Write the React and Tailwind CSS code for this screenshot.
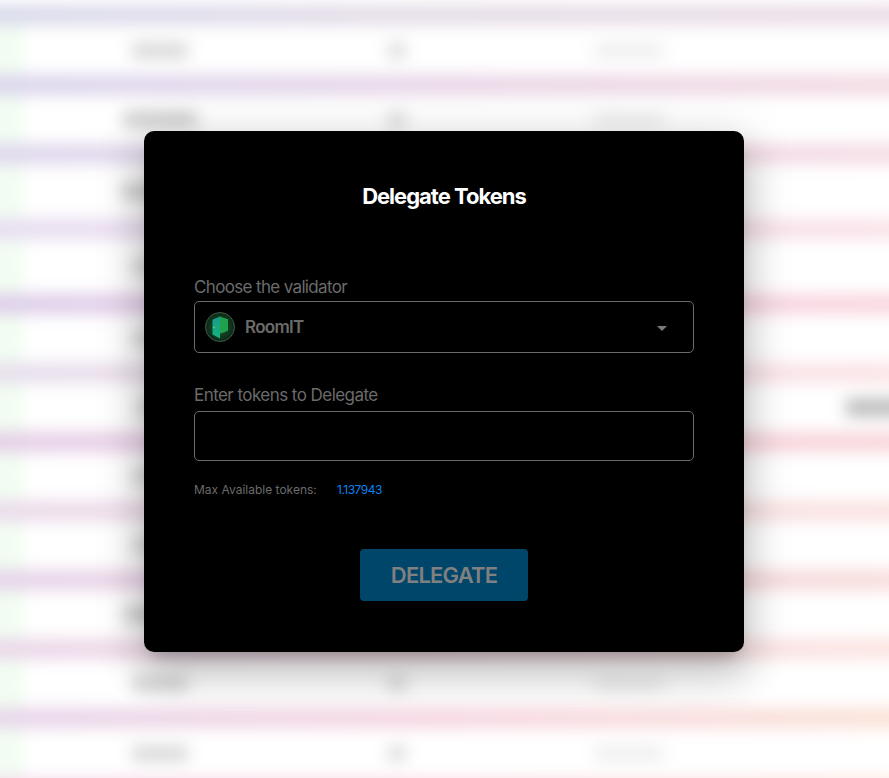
import React from "react";

// Validator table behind the dialog; h = row height, bar = divider gradient stops
const rows = [
  { h: "h-[50px]", bar: "from-[#d8d9ec] via-[#e5dce7] to-[#ebdce6]", ml: "ml-[152px]", w: "w-[56px]" },
  { h: "h-[49px]", bar: "from-[#d9d4ed] via-[#e8d5e7] to-[#f3d9e2]", ml: "ml-[143px]", w: "w-[74px]", dark: true },
  { h: "h-[55px]", bar: "from-[#ddd6ed] via-[#ead7e7] to-[#f6dbe4]", ml: "ml-[142px]", w: "w-[74px]", dark: true },
  { h: "h-[55px]", bar: "from-[#e6dcf1] via-[#f1dceb] to-[#fae2e8]", ml: "ml-[152px]", w: "w-[56px]" },
  { h: "h-[49px]", bar: "from-[#dbccea] via-[#edd0e2] to-[#fad6de]", ml: "ml-[152px]", w: "w-[56px]" },
  { h: "h-[49px]", bar: "from-[#e5ddec] via-[#f3dde9] to-[#fbe3e5]", ml: "ml-[156px]", w: "w-[52px]", extra: true },
  { h: "h-[49px]", bar: "from-[#e3cde7] via-[#f2d2e0] to-[#f8d5d9]", ml: "ml-[152px]", w: "w-[56px]" },
  { h: "h-[49px]", bar: "from-[#e9daeb] via-[#f3dbe6] to-[#fae2df]", ml: "ml-[152px]", w: "w-[56px]" },
  { h: "h-[49px]", bar: "from-[#e4d2e9] via-[#f2d5e1] to-[#f8dbd9]", ml: "ml-[144px]", w: "w-[68px]", dark: true },
  { h: "h-[49px]", bar: "from-[#e9d6e9] via-[#f6d8e3] to-[#fbe4e0]", ml: "ml-[152px]", w: "w-[56px]" },
  { h: "h-[50px]", bar: "from-[#e6d4ea] via-[#f6d5e1] to-[#fbe2d6]", ml: "ml-[152px]", w: "w-[56px]" },
  { h: "h-[48px]", bar: "from-[#f4daec] via-[#fadee6] to-[#fce6dd]", ml: "ml-[152px]", w: "w-[56px]" },
];

function Row({ row }) {
  return (
    <>
      <div className={`h-5 shrink-0 bg-linear-to-r ${row.bar}`} />
      <div className={`relative flex shrink-0 items-center bg-white ${row.h}`}>
        <div className="absolute inset-y-0 left-0 w-[44px] bg-[#f2fdf2]" />
        <div className={`h-[15px] shrink-0 ${row.ml} ${row.w} ${row.dark ? "bg-[#cacaca]" : "bg-[#d6d6d6]"}`} />
        <div className="absolute left-[408px] h-[15px] w-[18px] bg-[#dadada]" />
        <div className="absolute left-[614px] h-[13px] w-[70px] bg-[#ececec]" />
        {row.extra && <div className="absolute right-0 h-[17px] w-[63px] bg-[#b8b8b8]" />}
      </div>
    </>
  );
}

function Avatar() {
  return (
    <svg viewBox="0 0 30 30" className="h-[30px] w-[30px] shrink-0">
      <defs>
        <radialGradient id="glow">
          <stop offset="0.35" stopColor="#164b2a" />
          <stop offset="1" stopColor="#0a2715" />
        </radialGradient>
        <linearGradient id="door" x2="0" y2="1">
          <stop stopColor="#1a9c8a" />
          <stop offset="1" stopColor="#12b37f" />
        </linearGradient>
      </defs>
      <circle cx="15" cy="15" r="14.5" fill="url(#glow)" stroke="#49634f" strokeWidth="0.9" />
      <path d="M14.5 4.5 23 7.3v11.5l-7.3 2.6-1.2-1Z" fill="#20a14c" />
      <path d="M7.5 7.8 15 4.6v21.9l-7.5-4.1Z" fill="url(#door)" />
      <circle cx="8.9" cy="15.3" r="0.9" fill="#7ccc55" />
    </svg>
  );
}

export default function App() {
  return (
    <div className="relative flex h-[778px] w-[889px] items-start justify-center overflow-hidden bg-white pt-[131px] font-['Inter',sans-serif]">
      <div className="absolute -inset-x-5 top-[5px] flex flex-col blur-[8px]" aria-hidden="true">
        {rows.map((row, i) => <Row key={i} row={row} />)}
      </div>

      <section className="relative mr-px flex h-[521px] w-[600px] flex-col rounded-[10px] bg-black px-[50px] shadow-[0_11px_15px_-7px_rgba(0,0,0,0.2),0_24px_38px_3px_rgba(0,0,0,0.14),0_9px_46px_8px_rgba(0,0,0,0.12)]">
        <h1 className="mt-[50px] text-center text-[22px] leading-[30px] font-bold tracking-[-1px] whitespace-nowrap text-white">Delegate Tokens</h1>

        <label className="mt-[66px] h-5 text-[17px] leading-5 tracking-[-0.65px] whitespace-nowrap text-[#6b6b6b]">
          <span>Choose the validator</span>
        </label>
        <div className="mt-[4px] flex h-[52px] items-center rounded-[5px] border border-[#6b6b6b] pr-[26px] pl-[10px]">
          <Avatar />
          <span className="ml-[10px] pt-[2px] text-[17px] font-semibold tracking-[-0.7px] text-[#6b6b6b]">RoomIT</span>
          <svg viewBox="0 0 10 5" className="mt-[3px] ml-auto h-[5px] w-[10px] fill-[#7a7a7a]"><path d="M0 0h10L5 5Z" /></svg>
        </div>

        <label className="mt-[32px] h-5 text-[17px] leading-5 tracking-[-0.55px] whitespace-nowrap text-[#6b6b6b]">
          <span>Enter tokens to Delegate</span>
        </label>
        <div className="mt-[6px] h-[50px] rounded-[5px] border border-[#6b6b6b]" />

        <div className="mt-[19px] flex h-5 items-center text-[12px] whitespace-nowrap">
          <span className="w-[143px] text-[#6b6b6b]">Max Available tokens:</span>
          <span className="tracking-[-0.5px] text-[#0b84f3]">1.137943</span>
        </div>

        <button className="mt-[49px] h-[52px] w-[168px] self-center rounded-[4px] bg-[#00466a] text-[22px] font-semibold tracking-[-0.8px] text-[#808080]">DELEGATE</button>
      </section>
    </div>
  );
}
